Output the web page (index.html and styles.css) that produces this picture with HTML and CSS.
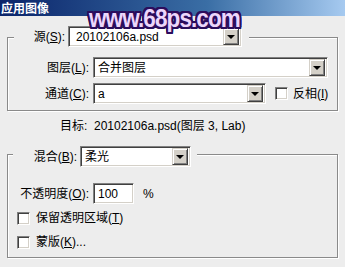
FILE: index.html
```html
<!DOCTYPE html>
<html>
<head>
<meta charset="utf-8">
<link rel="stylesheet" href="styles.css">
</head>
<body>
<div class="titlebar">应用图像</div>
<div class="content">
  <div class="group g1">
    <div class="legend l1">
      <span class="lab lab-src">源(<u>S</u>):</span>
      <div class="combo w-src"><span class="val val-src">20102106a.psd</span><span class="btn"><i class="arrow"></i></span></div>
    </div>
    <div class="row r-layer">
      <span class="lab lab-row">图层(<u>L</u>):</span>
      <div class="combo w-layer"><span class="val">合并图层</span><span class="btn"><i class="arrow"></i></span></div>
    </div>
    <div class="row r-chan">
      <span class="lab lab-row">通道(<u>C</u>):</span>
      <div class="combo w-chan"><span class="val">a</span><span class="btn"><i class="arrow"></i></span></div>
      <span class="check inv"></span>
      <span class="ctext">反相(<u>I</u>)</span>
    </div>
  </div>
  <div class="target">目标:  20102106a.psd(图层 3, Lab)</div>
  <div class="group g2">
    <div class="legend l2">
      <span class="lab lab-blend">混合(<u>B</u>):</span>
      <div class="combo w-blend"><span class="val">柔光</span><span class="btn"><i class="arrow"></i></span></div>
    </div>
    <div class="row r-op">
      <span class="lab lab-row">不透明度(<u>O</u>):</span>
      <div class="field"><span class="val">100</span></div>
      <span class="pct">%</span>
    </div>
    <div class="row r-cb1">
      <span class="check"></span>
      <span class="ctext">保留透明区域(<u>T</u>)</span>
    </div>
    <div class="row r-cb2">
      <span class="check"></span>
      <span class="ctext">蒙版(<u>K</u>)...</span>
    </div>
  </div>
</div>
<div class="watermark">www.68ps.com</div>
</body>
</html>
```
FILE: styles.css
```css
html, body {
  margin: 0;
  padding: 0;
}
body {
  width: 345px;
  height: 267px;
  overflow: hidden;
  background: #ededed;
  font-family: "Liberation Sans", "Noto Sans CJK SC", sans-serif;
  font-size: 12px;
  line-height: 14px;
  color: #000;
  position: relative;
}
u { text-decoration: underline; text-underline-offset: 1px; }

.titlebar {
  height: 16px;
  line-height: 16px;
  padding-left: 1px;
  color: #fff;
  font-weight: bold;
  font-family: "Noto Sans CJK SC", sans-serif;
  background: linear-gradient(to right, #0a246a 0%, #3a6ea5 60%, #a6caf0 100%);
}

.content {
  padding: 0 7px;
}

.group {
  border: 1px solid #8a8a8a;
  box-shadow: inset 1px 1px #fff, 1px 1px #fff;
  display: flex;
  flex-direction: column;
}
.g1 {
  margin-top: 21px;
  padding-bottom: 6px;
}
.g2 {
  margin-top: 21px;
  padding-bottom: 8px;
}

.legend {
  display: flex;
  align-items: center;
  align-self: flex-start;
  background: #ededed;
}
.l1 {
  margin-top: -12px;
  margin-left: 6px;
  padding-right: 7px;
}
.l2 {
  margin-top: -9px;
  margin-left: 5px;
  padding-right: 6px;
}

.lab {
  text-align: right;
  white-space: nowrap;
}
.lab-src { width: 51px; margin-right: 3px; }
.lab-blend { width: 64px; margin-right: 3px; }
.lab-row { width: 81px; margin-right: 4px; }

.row {
  display: flex;
  align-items: center;
}
.r-layer { margin-top: 10px; }
.r-chan { margin-top: 5px; }
.r-op { margin-top: 16px; }
.r-cb1 { margin-top: 7px; padding-left: 9px; }
.r-cb2 { margin-top: 10px; padding-left: 9px; }

.combo, .field {
  box-sizing: border-box;
  height: 21px;
  background: #fff;
  border: 1px solid;
  border-color: #808080 #fff #fff #808080;
  box-shadow: inset 1px 1px #404040, inset -1px -1px #d4d0c8;
  display: flex;
  align-items: center;
  padding: 2px;
}
.w-src { width: 174px; }
.w-layer { width: 235px; }
.w-chan { width: 173px; }
.w-blend { width: 111px; }
.field { width: 41px; }

.val {
  flex: 1;
  padding-left: 2px;
  white-space: nowrap;
  overflow: hidden;
}
.val-src { padding-left: 5px; }

.btn {
  box-sizing: border-box;
  width: 16px;
  height: 17px;
  background: #d4d0c8;
  border: 1px solid;
  border-color: #d4d0c8 #404040 #404040 #d4d0c8;
  box-shadow: inset 1px 1px #fff, inset -1px -1px #808080;
  display: flex;
  align-items: center;
  justify-content: center;
}
.arrow {
  width: 0;
  height: 0;
  border-left: 4px solid transparent;
  border-right: 4px solid transparent;
  border-top: 4px solid #000;
  margin-top: 1px;
}

.check {
  box-sizing: border-box;
  width: 13px;
  height: 13px;
  background: #fff;
  border: 1px solid;
  border-color: #808080 #fff #fff #808080;
  box-shadow: inset 1px 1px #404040, inset -1px -1px #d4d0c8;
  margin-right: 6px;
}
.inv { margin-left: 9px; margin-right: 5px; }
.ctext { white-space: nowrap; }

.pct { margin-left: 9px; }

.target {
  margin-top: 8px;
  height: 14px;
  padding-left: 53px;
  white-space: pre;
}

.watermark {
  position: absolute;
  left: 89px;
  top: 5px;
  font-family: "Liberation Sans", sans-serif;
  font-weight: bold;
  font-size: 25px;
  line-height: 26px;
  letter-spacing: -1px;
  transform: scaleX(0.9);
  transform-origin: left top;
  color: #ecd6fb;
  text-shadow:
    2px 0 #2b0d5c, -2px 0 #2b0d5c, 0 2px #2b0d5c, 0 -2px #2b0d5c,
    2px 2px #2b0d5c, -2px -2px #2b0d5c, 2px -2px #2b0d5c, -2px 2px #2b0d5c,
    1px 2px #2b0d5c, 2px 1px #2b0d5c, -1px 2px #2b0d5c, -2px 1px #2b0d5c,
    1px -2px #2b0d5c, 2px -1px #2b0d5c, -1px -2px #2b0d5c, -2px -1px #2b0d5c;
}
```
